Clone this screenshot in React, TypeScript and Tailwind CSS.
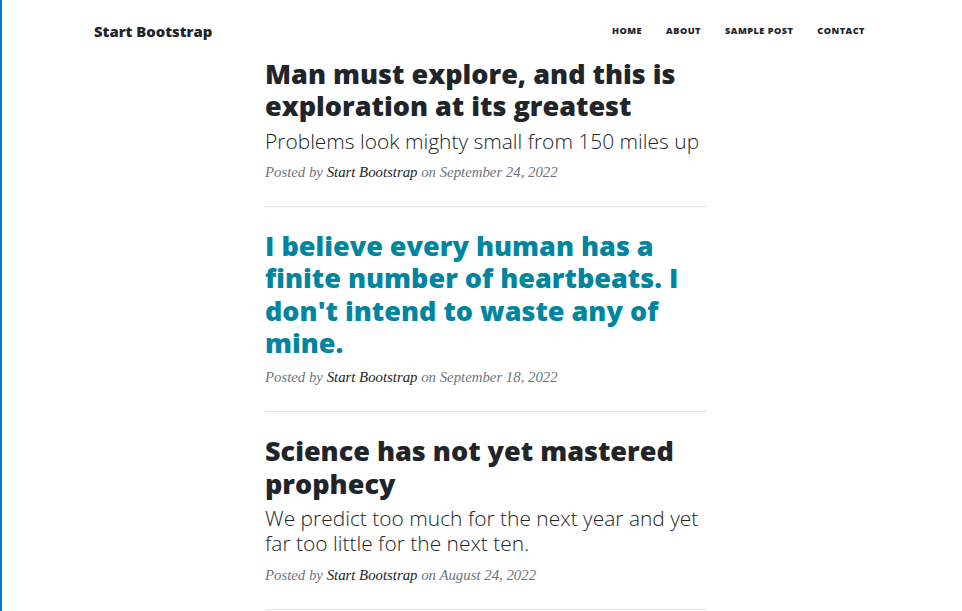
const posts = [
  {
    title: "Man must explore, and this is exploration at its greatest",
    subtitle: "Problems look mighty small from 150 miles up",
    date: "September 24, 2022",
    active: false,
  },
  {
    title: "I believe every human has a finite number of heartbeats. I don't intend to waste any of mine.",
    subtitle: "",
    date: "September 18, 2022",
    active: true,
  },
  {
    title: "Science has not yet mastered prophecy",
    subtitle: "We predict too much for the next year and yet far too little for the next ten.",
    date: "August 24, 2022",
    active: false,
  },
]

function Nav() {
  return (
    <nav className="flex items-center justify-between h-[62px] pl-[92px] pr-[97px]">
      <a className="text-[14.85px] font-extrabold text-[#212529]">Start Bootstrap</a>
      <ul className="flex items-center gap-[24px] text-[9.2px] font-extrabold uppercase tracking-[0.05em] text-[#212529]">
        <li>Home</li>
        <li>About</li>
        <li>Sample Post</li>
        <li>Contact</li>
      </ul>
    </nav>
  )
}

function PostPreview({ post }: { post: (typeof posts)[number] }) {
  return (
    <div className="border-b border-[#dee2e6]">
      <h2
        className={`text-[27px] leading-[32.3px] font-extrabold ${post.active ? "text-[#0085a1]" : "text-[#212529]"}`}
      >
        {post.title}
      </h2>
      {post.subtitle && (
        <h3 className="mt-[6px] text-[20.95px] leading-[25.5px] font-light text-[#212529]">{post.subtitle}</h3>
      )}
      <p className="mt-[6px] mb-[22px] text-[14.8px] leading-[24px] italic text-[#6c757d] font-['Liberation_Serif',serif]">
        Posted by <span className="text-[#212529]">Start Bootstrap</span> on {post.date}
      </p>
    </div>
  )
}

export default function App() {
  return (
    <div className="min-h-[611px] bg-white border-l-2 border-[#0078d4] font-['Open_Sans',sans-serif]">
      <Nav />
      <main className="w-[442px] ml-[263px] -mt-[4px] flex flex-col gap-[23px]">
        {posts.map((p) => (
          <PostPreview key={p.date} post={p} />
        ))}
      </main>
    </div>
  )
}
